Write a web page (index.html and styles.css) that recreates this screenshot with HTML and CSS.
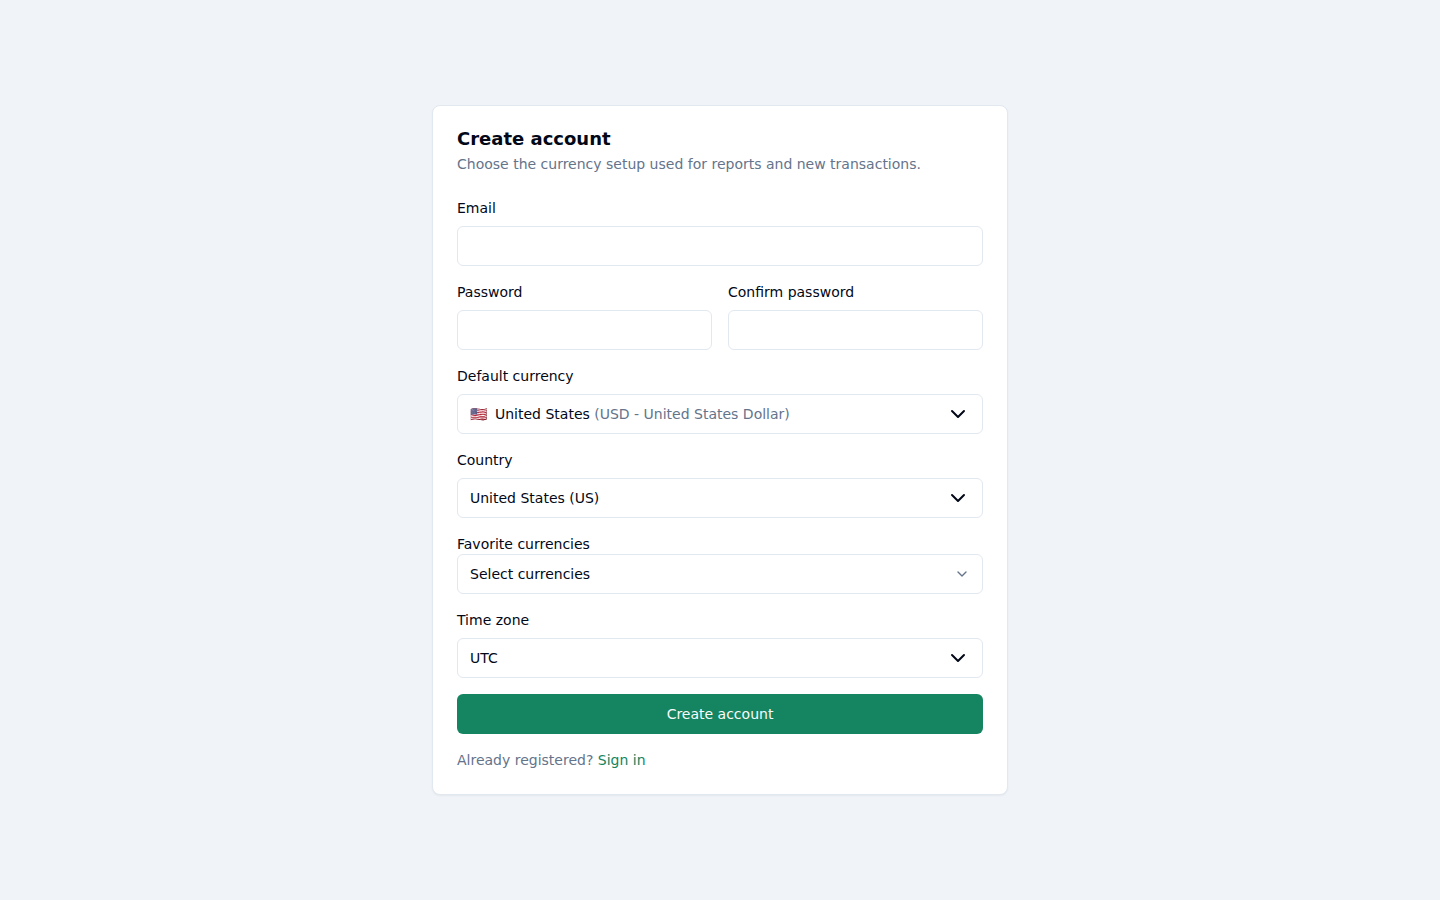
FILE: index.html
```html
<!DOCTYPE html>
<html lang="en">
<head>
<meta charset="utf-8">
<meta name="viewport" content="width=device-width, initial-scale=1">
<title>Create account</title>
<link rel="stylesheet" href="styles.css">
</head>
<body>
<main class="page">
  <section class="card">
    <header class="card-header">
      <h1 class="card-title">Create account</h1>
      <p class="card-description">Choose the currency setup used for reports and new transactions.</p>
    </header>
    <form class="form">
      <div class="field">
        <label for="email">Email</label>
        <input class="control" id="email" type="email" autocomplete="email">
      </div>
      <div class="row">
        <div class="field">
          <label for="password">Password</label>
          <input class="control" id="password" type="password">
        </div>
        <div class="field">
          <label for="confirm">Confirm password</label>
          <input class="control" id="confirm" type="password">
        </div>
      </div>
      <div class="field">
        <label for="currency">Default currency</label>
        <button class="control trigger" id="currency" type="button" aria-haspopup="listbox">
          <span class="currency"><span class="flag">🇺🇸</span><span>United States <span class="muted">(USD - United States Dollar)</span></span></span>
          <svg class="chevron" viewBox="0 0 16 16" aria-hidden="true"><path d="m2 5 6 6 6-6"/></svg>
        </button>
      </div>
      <div class="field">
        <label for="country">Country</label>
        <div class="select-wrap">
          <select class="control" id="country"><option>United States (US)</option></select>
          <svg class="chevron" viewBox="0 0 16 16" aria-hidden="true"><path d="m2 5 6 6 6-6"/></svg>
        </div>
      </div>
      <div class="field field-tight">
        <label for="favorites">Favorite currencies</label>
        <button class="control trigger trigger-small" id="favorites" type="button" aria-haspopup="listbox">
          <span>Select currencies</span>
          <svg class="chevron chevron-small" viewBox="0 0 24 24" aria-hidden="true"><path d="m6 9 6 6 6-6"/></svg>
        </button>
      </div>
      <div class="field">
        <label for="timezone">Time zone</label>
        <div class="select-wrap">
          <select class="control" id="timezone"><option>UTC</option></select>
          <svg class="chevron" viewBox="0 0 16 16" aria-hidden="true"><path d="m2 5 6 6 6-6"/></svg>
        </div>
      </div>
      <button class="submit" type="submit">Create account</button>
      <p class="muted">Already registered? <a class="link" href="#">Sign in</a></p>
    </form>
  </section>
</main>
</body>
</html>
```
FILE: styles.css
```css
* {
  box-sizing: border-box;
}

body {
  margin: 0;
  background: #f0f4f9;
  color: #020817;
  font: 14px/20px "DejaVu Sans", "Noto Color Emoji", sans-serif;
}

h1,
p {
  margin: 0;
}

.page {
  display: grid;
  place-items: center;
  min-height: 100vh;
  padding: 16px;
}

.card {
  width: 100%;
  max-width: 576px;
  padding: 24px;
  border: 1px solid #e2e8f0;
  border-radius: 8px;
  background: #fff;
  box-shadow: 0 1px 2px rgba(0, 0, 0, 0.05);
}

.card-header {
  display: grid;
  gap: 6px;
  margin-bottom: 24px;
}

.card-title {
  font-size: 18px;
  line-height: 18px;
  font-weight: 700;
}

.card-description,
.muted {
  color: #64748b;
}

.form {
  display: grid;
  gap: 16px;
}

.row {
  display: grid;
  grid-template-columns: 1fr 1fr;
  gap: 16px;
}

.field {
  display: grid;
  gap: 8px;
}

.field-tight {
  gap: 0;
}

.control {
  width: 100%;
  height: 40px;
  padding: 0 12px;
  border: 1px solid #e2e8f0;
  border-radius: 6px;
  background: #fff;
  color: inherit;
  font: inherit;
  appearance: none;
}

.trigger {
  display: flex;
  align-items: center;
  justify-content: space-between;
  padding-right: 16px;
  text-align: left;
}

.trigger-small {
  padding-right: 12px;
}

.currency {
  display: flex;
  gap: 8px;
}

.flag {
  width: 17px;
}

.select-wrap {
  display: grid;
  align-items: center;
}

.select-wrap > * {
  grid-area: 1 / 1;
}

.select-wrap .chevron {
  justify-self: end;
  margin-right: 17px;
  pointer-events: none;
}

.chevron {
  width: 16px;
  height: 16px;
  fill: none;
  stroke: currentColor;
  stroke-width: 2;
  stroke-linecap: round;
  stroke-linejoin: round;
}

.chevron-small {
  color: #64748b;
}

.submit {
  height: 40px;
  border: 0;
  border-radius: 6px;
  background: #148560;
  color: #f8fafc;
  font: inherit;
}

.link {
  color: #148560;
  text-decoration: none;
}
```
